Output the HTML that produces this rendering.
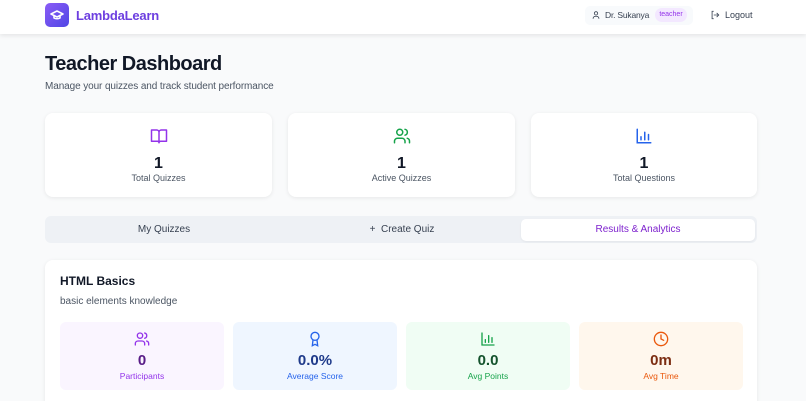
<!DOCTYPE html>
<html><head><meta charset="utf-8"><style>
*{margin:0;padding:0;box-sizing:border-box}
html,body{width:806px;height:401px;overflow:hidden}
body{background:#f9fafb;font-family:"Liberation Sans",sans-serif;position:relative;color:#111827}
.a{position:absolute}
.hdr{left:0;top:0;width:806px;height:34px;background:#fff;box-shadow:0 2px 4px rgba(0,0,0,.08)}
.card{background:#fff;border-radius:8px;box-shadow:0 1px 4px rgba(0,0,0,.08)}
.c{text-align:center}
.stat .n{position:absolute;left:0;right:0;top:42px;font-size:16px;font-weight:bold;text-align:center}
.stat .l{position:absolute;left:0;right:0;top:60px;font-size:9px;color:#4b5563;text-align:center}
.stat svg{position:absolute;left:50%;top:14px;margin-left:-9px}
.mini{border-radius:6px;width:164px;height:68px}
.mini svg{position:absolute;left:50%;top:9px;margin-left:-8px}
.mini .n{position:absolute;left:0;right:0;top:30px;font-size:15px;font-weight:bold;text-align:center}
.mini .l{position:absolute;left:0;right:0;top:49px;font-size:8.5px;text-align:center}
</style></head><body>
<div class="a hdr"></div>
<div class="a" style="left:45px;top:3px;width:24px;height:24px;border-radius:5px;background:linear-gradient(135deg,#8b5cf6,#4f46e5)">
<svg width="24" height="24" viewBox="0 0 24 24" fill="none" stroke="#fff" stroke-width="1.6" stroke-linecap="round" stroke-linejoin="round"><path d="M12 8l6 3-6 3-6-3z"/><path d="M9 12.5v2.5c1.5 1 4.5 1 6 0v-2.5"/></svg></div>
<div class="a" style="left:76px;top:8px;font-size:13px;font-weight:bold;color:#6d3fe0;letter-spacing:-.2px">LambdaLearn</div>
<div class="a" style="left:585px;top:6px;width:108px;height:19px;background:#f8fafc;border-radius:5px"></div>
<svg class="a" style="left:591px;top:10px" width="10" height="10" viewBox="0 0 24 24" fill="none" stroke="#374151" stroke-width="2"><circle cx="12" cy="8" r="4"/><path d="M5 21c0-4 3-6 7-6s7 2 7 6"/></svg>
<div class="a" style="left:605px;top:10px;font-size:8.5px;color:#374151;letter-spacing:-.2px">Dr. Sukanya</div>
<div class="a" style="left:655px;top:8px;width:32px;height:14px;background:#f3e8ff;border-radius:7px;font-size:7px;color:#9333ea;text-align:center;line-height:14px">teacher</div>
<svg class="a" style="left:710px;top:10px" width="10" height="10" viewBox="0 0 24 24" fill="none" stroke="#374151" stroke-width="2"><path d="M9 21H5V3h4M16 17l5-5-5-5M21 12H9"/></svg>
<div class="a" style="left:725px;top:10px;font-size:9px;color:#374151">Logout</div>

<div class="a" style="left:45px;top:53px;font-size:20px;font-weight:bold;letter-spacing:-.5px">Teacher Dashboard</div>
<div class="a" style="left:45px;top:81px;font-size:10px;color:#4b5563;letter-spacing:-.1px">Manage your quizzes and track student performance</div>

<div class="a card stat" style="left:45px;top:113px;width:227px;height:84px">
<svg width="18" height="18" viewBox="0 0 24 24" fill="none" stroke="#9333ea" stroke-width="2" stroke-linejoin="round"><path d="M2 4h7a3 3 0 0 1 3 3v14a2 2 0 0 0-2-2H2zM22 4h-7a3 3 0 0 0-3 3v14a2 2 0 0 1 2-2h8z"/></svg>
<div class="n">1</div><div class="l">Total Quizzes</div></div>
<div class="a card stat" style="left:288px;top:113px;width:227px;height:84px">
<svg width="18" height="18" viewBox="0 0 24 24" fill="none" stroke="#16a34a" stroke-width="2" stroke-linecap="round"><circle cx="9" cy="7" r="4"/><path d="M2 21v-2a4 4 0 0 1 4-4h6a4 4 0 0 1 4 4v2M16 3.1a4 4 0 0 1 0 7.8M22 21v-2a4 4 0 0 0-3-3.9"/></svg>
<div class="n">1</div><div class="l">Active Quizzes</div></div>
<div class="a card stat" style="left:531px;top:113px;width:226px;height:84px">
<svg width="18" height="18" viewBox="0 0 24 24" fill="none" stroke="#2563eb" stroke-width="2" stroke-linecap="round"><path d="M3 3v18h18M8 17v-4M13 17V7M18 17v-7"/></svg>
<div class="n">1</div><div class="l">Total Questions</div></div>

<div class="a" style="left:45px;top:216px;width:712px;height:27px;background:#eef1f5;border-radius:6px"></div>
<div class="a c" style="left:45px;top:224px;width:238px;font-size:10px;color:#374151">My Quizzes</div>
<div class="a c" style="left:283px;top:224px;width:238px;font-size:10px;color:#374151">+&nbsp; Create Quiz</div>
<div class="a c" style="left:521px;top:219px;width:234px;height:22px;background:#fff;border-radius:5px;font-size:10px;color:#7e22ce;line-height:22px;box-shadow:0 1px 2px rgba(0,0,0,.05)">Results &amp; Analytics</div>

<div class="a card" style="left:45px;top:260px;width:712px;height:160px"></div>
<div class="a" style="left:60px;top:274px;font-size:12px;font-weight:bold">HTML Basics</div>
<div class="a" style="left:60px;top:296px;font-size:10px;color:#4b5563">basic elements knowledge</div>

<div class="a mini" style="left:60px;top:322px;background:#faf5ff">
<svg width="16" height="16" viewBox="0 0 24 24" fill="none" stroke="#9333ea" stroke-width="2" stroke-linecap="round"><circle cx="9" cy="7" r="4"/><path d="M2 21v-2a4 4 0 0 1 4-4h6a4 4 0 0 1 4 4v2M16 3.1a4 4 0 0 1 0 7.8M22 21v-2a4 4 0 0 0-3-3.9"/></svg>
<div class="n" style="color:#581c87">0</div><div class="l" style="color:#9333ea">Participants</div></div>
<div class="a mini" style="left:233px;top:322px;background:#eff6ff">
<svg width="16" height="16" viewBox="0 0 24 24" fill="none" stroke="#2563eb" stroke-width="2" stroke-linecap="round"><circle cx="12" cy="8" r="6"/><path d="M9 13.5L8 22l4-2 4 2-1-8.5"/></svg>
<div class="n" style="color:#1e3a8a">0.0%</div><div class="l" style="color:#2563eb">Average Score</div></div>
<div class="a mini" style="left:406px;top:322px;background:#f0fdf4">
<svg width="16" height="16" viewBox="0 0 24 24" fill="none" stroke="#16a34a" stroke-width="2" stroke-linecap="round"><path d="M3 3v18h18M8 17v-4M13 17V7M18 17v-7"/></svg>
<div class="n" style="color:#14532d">0.0</div><div class="l" style="color:#16a34a">Avg Points</div></div>
<div class="a mini" style="left:579px;top:322px;background:#fff7ed">
<svg width="16" height="16" viewBox="0 0 24 24" fill="none" stroke="#ea580c" stroke-width="2" stroke-linecap="round"><circle cx="12" cy="12" r="10"/><path d="M12 6v6l4 2"/></svg>
<div class="n" style="color:#7c2d12">0m</div><div class="l" style="color:#ea580c">Avg Time</div></div>
</body></html>
